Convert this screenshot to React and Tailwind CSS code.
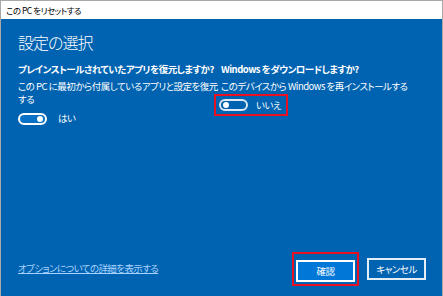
import React from "react";

const font = { fontFamily: '"Noto Sans CJK JP", "Noto Sans", sans-serif' };

function Toggle({ on }) {
  return (
    <div
      className={
        "w-[29px] h-[12px] rounded-full border-2 flex items-center px-[2px] " +
        (on ? "border-white bg-[#0a72c6] justify-end" : "border-[#dce8f5] justify-start")
      }
    >
      <div className="w-[6px] h-[6px] rounded-full bg-white" />
    </div>
  );
}

export default function App() {
  return (
    <div
      className="w-[443px] h-[296px] flex flex-col border-t border-x border-[#a8a8a8] bg-[#0063b1] overflow-hidden [font-feature-settings:'palt']"
      style={font}
    >
      {/* TITLE BAR */}
      <div className="h-[18px] bg-white flex items-center pl-[5px] text-[8.5px] tracking-[-0.5px] text-black">
        この PC をリセットする
      </div>

      {/* CONTENT */}
      <div className="flex-1 flex flex-col px-[17px] pt-[11px] pb-[10px] text-white">
        <h1 className="text-[16px] leading-[24px] font-light tracking-[-1px]">設定の選択</h1>

        <div className="mt-[9px] grid grid-cols-[203px_1fr] text-[9.5px] leading-[13px] tracking-[-0.5px]">
          {/* LEFT */}
          <div className="flex flex-col">
            <p className="font-bold">
              プレインストールされていたアプリを復元しますか?
            </p>
            <p className="mt-[4px] -mr-[4px]">
              この PC に最初から付属しているアプリと設定を復元する
            </p>
            <div className="mt-[6px] flex items-center gap-[11px]">
              <Toggle on />
              <span>はい</span>
            </div>
          </div>

          {/* RIGHT */}
          <div className="flex flex-col">
            <p className="font-bold">
              Windows をダウンロードしますか?
            </p>
            <p className="mt-[4px]">
              このデバイスから Windows を再インストールする
            </p>
            <div className="mt-[1px] -ml-[7px] self-start border-2 border-[#e81123] pl-[3px] pr-[5px] py-[2px] flex items-center gap-[8px]">
              <Toggle />
              <span className="leading-[14px]">いいえ</span>
            </div>
          </div>
        </div>

        {/* FOOTER */}
        <div className="mt-auto flex items-center">
          <a href="#" className="text-[9.5px] leading-[13px] tracking-[-0.6px] text-[#a9d3ff] underline">
            オプションについての詳細を表示する
          </a>
          <div className="ml-auto flex items-center gap-[8px] -mr-[9px] pr-[8px] tracking-[-0.5px]">
            <div className="border-2 border-[#e81123] p-[2px]">
              <button className="w-[59px] h-[22px] bg-[#0078d7] border-2 border-white text-[9.5px] text-white">
                確認
              </button>
            </div>
            <button className="w-[59px] h-[22px] border-2 border-[#e4eef8] text-[9.5px] text-white">
              キャンセル
            </button>
          </div>
        </div>
      </div>
    </div>
  );
}
